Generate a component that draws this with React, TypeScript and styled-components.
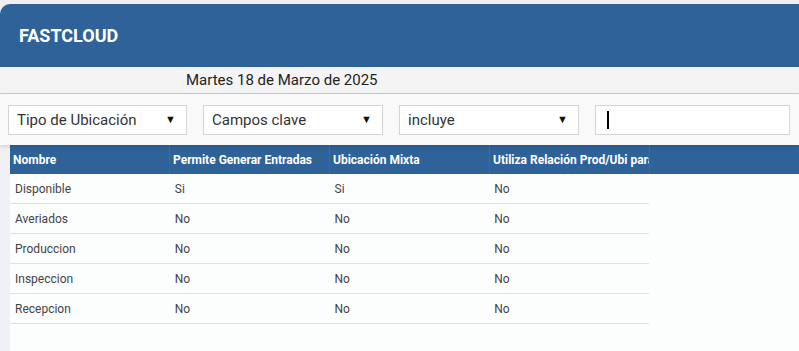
import React from "react";
import styled, { createGlobalStyle } from "styled-components";

const GlobalStyle = createGlobalStyle`
  html, body {
    margin: 0;
    padding: 0;
    background: #f0f0f0;
    font-family: Roboto, "Liberation Sans", sans-serif;
  }
`;

const Page = styled.div`
  padding-top: 4px;
  height: 347px;
  display: flex;
  flex-direction: column;
  overflow: hidden;
`;

const TopBar = styled.header`
  height: 63px;
  background: #2e6299;
  border-top-left-radius: 10px;
  display: flex;
  align-items: center;
  padding-left: 19px;
  color: #fff;
  font-size: 18px;
  font-weight: 700;
`;

const DateBar = styled.div`
  height: 26px;
  background: #f4f4f4;
  border-bottom: 1px solid #c8c8c8;
  display: flex;
  align-items: center;
  padding-left: 186px;
  font-size: 15px;
  color: #222;
`;

const FilterBar = styled.div`
  height: 51px;
  background: #f9f9f9;
  display: flex;
  align-items: center;
  gap: 16px;
  padding: 0 8px;
  box-shadow: 0 2px 4px rgba(0, 0, 0, 0.12);
  position: relative;
  z-index: 1;
`;

const Field = styled.div<{ $width: number }>`
  width: ${(p) => p.$width}px;
  height: 30px;
  box-sizing: border-box;
  background: #fff;
  border: 1px solid #d4d4d4;
  display: flex;
  align-items: center;
  padding: 0 10px 0 8px;
  font-size: 15px;
  color: #333;
`;

const FieldLabel = styled.span`
  flex: 1;
`;

const Arrow = styled.span`
  font-size: 11px;
  color: #111;
`;

const Caret = styled.span`
  width: 2px;
  height: 18px;
  background: #000;
  margin-left: 3px;
`;

const Body = styled.div`
  flex: 1;
  display: flex;
`;

const Gutter = styled.div`
  width: 10px;
  background: #eff1f4;
`;

const Content = styled.div`
  flex: 1;
  background: #fcfdfd;
`;

const HeadRow = styled.div`
  height: 29px;
  background: #2e6299;
  display: flex;
`;

const HeadCell = styled.div`
  width: 160px;
  box-sizing: border-box;
  padding-left: 3px;
  display: flex;
  align-items: center;
  color: #fff;
  font-size: 12px;
  font-weight: 700;
  white-space: nowrap;
  overflow: hidden;
  border-right: 1px solid rgba(255, 255, 255, 0.06);
`;

const Row = styled.div`
  height: 30px;
  width: 639px;
  box-sizing: border-box;
  display: flex;
  border-bottom: 1px solid #e0e0e0;
`;

const Cell = styled.div`
  width: 160px;
  box-sizing: border-box;
  padding-left: 5px;
  display: flex;
  align-items: center;
  font-size: 12px;
  color: #444;
`;

const columns = [
  "Nombre",
  "Permite Generar Entradas",
  "Ubicación Mixta",
  "Utiliza Relación Prod/Ubi para",
];

const rows = [
  ["Disponible", "Si", "Si", "No"],
  ["Averiados", "No", "No", "No"],
  ["Produccion", "No", "No", "No"],
  ["Inspeccion", "No", "No", "No"],
  ["Recepcion", "No", "No", "No"],
];

export default function App() {
  return (
    <>
      <GlobalStyle />
      <Page>
        <TopBar>FASTCLOUD</TopBar>
        <DateBar>Martes 18 de Marzo de 2025</DateBar>
        <FilterBar>
          <Field $width={179}>
            <FieldLabel>Tipo de Ubicación</FieldLabel>
            <Arrow>▼</Arrow>
          </Field>
          <Field $width={180}>
            <FieldLabel>Campos clave</FieldLabel>
            <Arrow>▼</Arrow>
          </Field>
          <Field $width={180}>
            <FieldLabel>incluye</FieldLabel>
            <Arrow>▼</Arrow>
          </Field>
          <Field $width={195}>
            <Caret />
          </Field>
        </FilterBar>
        <Body>
          <Gutter />
          <Content>
            <HeadRow>
              {columns.map((c) => (
                <HeadCell key={c}>{c}</HeadCell>
              ))}
            </HeadRow>
            {rows.map((r) => (
              <Row key={r[0]}>
                {r.map((v, i) => (
                  <Cell key={i}>{v}</Cell>
                ))}
              </Row>
            ))}
          </Content>
        </Body>
      </Page>
    </>
  );
}
